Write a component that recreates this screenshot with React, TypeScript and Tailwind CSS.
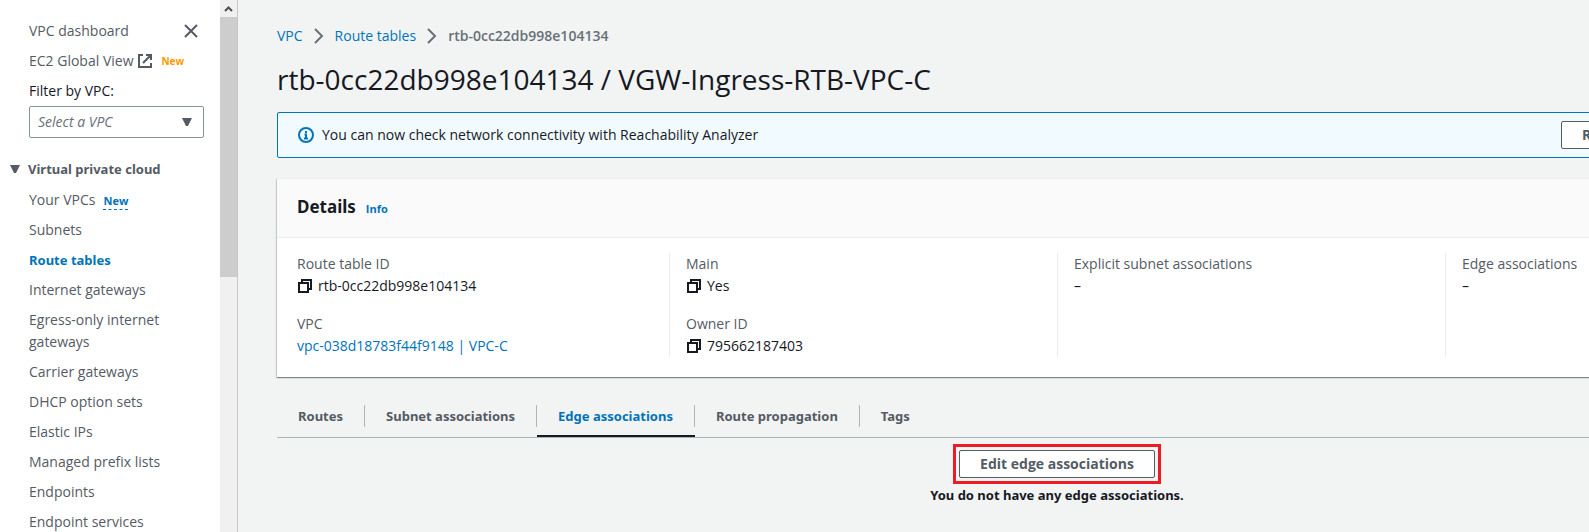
import React from "react";

const navItems = [
  "Subnets",
  "Route tables",
  "Internet gateways",
  "Egress-only internet gateways",
  "Carrier gateways",
  "DHCP option sets",
  "Elastic IPs",
  "Managed prefix lists",
  "Endpoints",
  "Endpoint services",
];

const tabs = ["Routes", "Subnet associations", "Edge associations", "Route propagation", "Tags"];

const CopyIcon = () => (
  <svg className="w-4 h-4 shrink-0" viewBox="0 0 16 16" fill="none" stroke="#16191f" strokeWidth="2">
    <path d="M2 5h9v9H2z" />
    <path d="M5 5V2h9v9h-3" />
  </svg>
);

const Chevron = () => (
  <svg className="w-4 h-4" viewBox="0 0 16 16" fill="none" stroke="#687078" strokeWidth="2">
    <path d="M4 1l7 7-7 7" />
  </svg>
);

const CloseIcon = () => (
  <svg className="w-4 h-4" viewBox="0 0 16 16" fill="none" stroke="#545b64" strokeWidth="2">
    <path d="M2 2l12 12M14 2L2 14" />
  </svg>
);

const Caret = ({ className }: { className: string }) => (
  <svg className={className} viewBox="0 0 12 10" fill="#545b64">
    <path d="M1 1h10L7 9H5z" />
  </svg>
);

const Field = ({ label, children }: { label: string; children: React.ReactNode }) => (
  <div>
    <dt className="text-[#545b64]">{label}</dt>
    <dd className="flex items-center gap-[5px]">{children}</dd>
  </div>
);

const Sidebar = () => (
  <div className="flex shrink-0 w-[238px] border-r border-[#c4c8c8] bg-white">
    <nav className="flex-1 pt-5 pl-[9px] pr-4 text-[#545b64]">
      <div className="pl-5 flex flex-col gap-2">
        <div className="flex justify-between items-center pr-[5px]">
          <a href="#">VPC dashboard</a>
          <button aria-label="Close navigation">
            <CloseIcon />
          </button>
        </div>
        <div className="flex items-center">
          <a href="#" className="flex items-center gap-1">
            EC2 Global View
            <svg className="w-4 h-4" viewBox="0 0 16 16" fill="none" stroke="#545b64" strokeWidth="2">
              <path d="M6 2H2v12h12v-4M9 2h5v5M14 2L6 10" />
            </svg>
          </a>
          <span className="ml-2 text-[10px] font-bold text-[#ff9900]">New</span>
        </div>
        <div>
          <label htmlFor="vpc-filter" className="block text-[#16191f]">
            Filter by VPC:
          </label>
          <div className="relative mt-1">
            <select
              id="vpc-filter"
              className="appearance-none w-full h-8 px-2 border border-[#879596] rounded-xs bg-white italic text-[#687078]"
            >
              <option>Select a VPC</option>
            </select>
            <Caret className="absolute right-[11px] top-[11px] w-3 h-[10px] pointer-events-none" />
          </div>
        </div>
      </div>
      <h2 className="mt-5 flex items-center gap-[7px] font-['Noto_Sans',sans-serif] text-[13px] font-bold">
        <Caret className="w-3 h-[10px]" />
        Virtual private cloud
      </h2>
      <ul className="mt-[9px] pl-5 flex flex-col gap-2">
        <li>
          <a href="#">Your VPCs</a>
          <a href="#" className="ml-2 text-[11px] leading-4 inline-block font-bold text-[#0073bb] border-b border-dashed border-[#0073bb]">
            New
          </a>
        </li>
        {navItems.map((item) => (
          <li key={item}>
            <a
              href="#"
              className={item === "Route tables" ? "block font-['Noto_Sans',sans-serif] text-[13px] font-bold text-[#0073bb]" : "block"}
            >
              {item}
            </a>
          </li>
        ))}
      </ul>
    </nav>
    {/* scrollbar */}
    <div className="w-[17px] bg-[#f0f0f0]">
      <div className="h-[17px] flex items-center justify-center">
        <svg className="w-[9px] h-[6px]" viewBox="0 0 9 6" fill="none" stroke="#505050" strokeWidth="2">
          <path d="M1 5l3.500-3.500L8 5" />
        </svg>
      </div>
      <div className="h-[260px] bg-[#cdcdcd]"></div>
    </div>
  </div>
);

const App = () => {
  return (
    <div className="flex h-screen overflow-hidden bg-[#f2f3f3] font-['Open_Sans',sans-serif] text-[14px] leading-[22px] text-[#16191f]">
      <Sidebar />
      <main className="flex-1 overflow-hidden pl-[39px]">
        <div className="min-w-[1560px]">
          <div className="pt-[25px] flex items-center gap-2">
            <a href="#" className="text-[#0073bb]">VPC</a>
            <Chevron />
            <a href="#" className="text-[#0073bb]">Route tables</a>
            <Chevron />
            <span className="font-semibold text-[#687078]">rtb-0cc22db998e104134</span>
          </div>
          <h1 className="mt-[14px] text-[28px] leading-[36px]">rtb-0cc22db998e104134 / VGW-Ingress-RTB-VPC-C</h1>

          <div className="mt-[15px] h-[46px] pl-5 pr-4 flex items-center border border-[#0073bb] rounded-xs bg-[#f1faff]">
            <svg className="w-4 h-4 mr-2" viewBox="0 0 16 16" fill="none" stroke="#0073bb" strokeWidth="2">
              <circle cx="8" cy="8" r="7" />
              <path d="M8 11V7.500H6.500M6 11.500h4M8 4v2" />
            </svg>
            <p className="flex-1">You can now check network connectivity with Reachability Analyzer</p>
            <button className="w-[216px] h-7 px-5 flex items-center whitespace-nowrap border border-[#545b64] rounded-xs bg-white font-bold text-[#545b64]">
              Run Reachability Analyzer
            </button>
            <button aria-label="Dismiss" className="ml-[27px]">
              <CloseIcon />
            </button>
          </div>

          <section className="mt-5 border-t border-[#eaeded] bg-white shadow-[0_1px_1px_0_rgba(0,28,36,0.3),1px_1px_1px_0_rgba(0,28,36,0.15),-1px_1px_1px_0_rgba(0,28,36,0.15)]">
            <header className="h-[59px] px-5 flex items-baseline pt-[17px] gap-[10px] border-b border-[#eaeded] bg-[#fafafa]">
              <h2 className="font-['Noto_Sans',sans-serif] text-[17px] font-bold">Details</h2>
              <a href="#" className="text-[11px] font-bold text-[#0073bb]">Info</a>
            </header>
            <div className="px-1 pt-[15px] pb-5 grid grid-cols-4">
              <dl className="px-4 h-[104px] flex flex-col gap-4">
                <Field label="Route table ID">
                  <CopyIcon />
                  rtb-0cc22db998e104134
                </Field>
                <Field label="VPC">
                  <a href="#" className="text-[#0073bb]">vpc-038d18783f44f9148 | VPC-C</a>
                </Field>
              </dl>
              <dl className="px-4 flex flex-col gap-4 border-l border-[#eaeded]">
                <Field label="Main">
                  <CopyIcon />
                  Yes
                </Field>
                <Field label="Owner ID">
                  <CopyIcon />
                  795662187403
                </Field>
              </dl>
              <dl className="px-4 border-l border-[#eaeded]">
                <Field label="Explicit subnet associations">–</Field>
              </dl>
              <dl className="px-4 border-l border-[#eaeded]">
                <Field label="Edge associations">–</Field>
              </dl>
            </div>
          </section>

          <div role="tablist" className="mt-7 flex border-b border-[#aab7b8] font-['Noto_Sans',sans-serif] text-[13px] font-bold text-[#545b64]">
            {tabs.map((tab, i) => (
              <button
                key={tab}
                role="tab"
                aria-selected={tab === "Edge associations"}
                className={
                  tab === "Edge associations"
                    ? "pb-2 border-b-2 border-[#16191f] text-[#0073bb]"
                    : "pb-2 border-b-2 border-transparent"
                }
              >
                <span className={i < tabs.length - 1 ? "block px-[21px] border-r border-[#aab7b8]" : "block px-[21px]"}>{tab}</span>
              </button>
            ))}
          </div>

          <div className="pt-[6px] flex flex-col items-center">
            <div className="p-[3px] border-[3px] border-[#ed1c24]">
              <button className="h-7 px-5 flex items-center border border-[#545b64] rounded-xs bg-white font-bold text-[#545b64]">
                Edit edge associations
              </button>
            </div>
            <p className="font-['Noto_Sans',sans-serif] text-[13px] font-bold">You do not have any edge associations.</p>
          </div>
        </div>
      </main>
    </div>
  );
};

export default App;
